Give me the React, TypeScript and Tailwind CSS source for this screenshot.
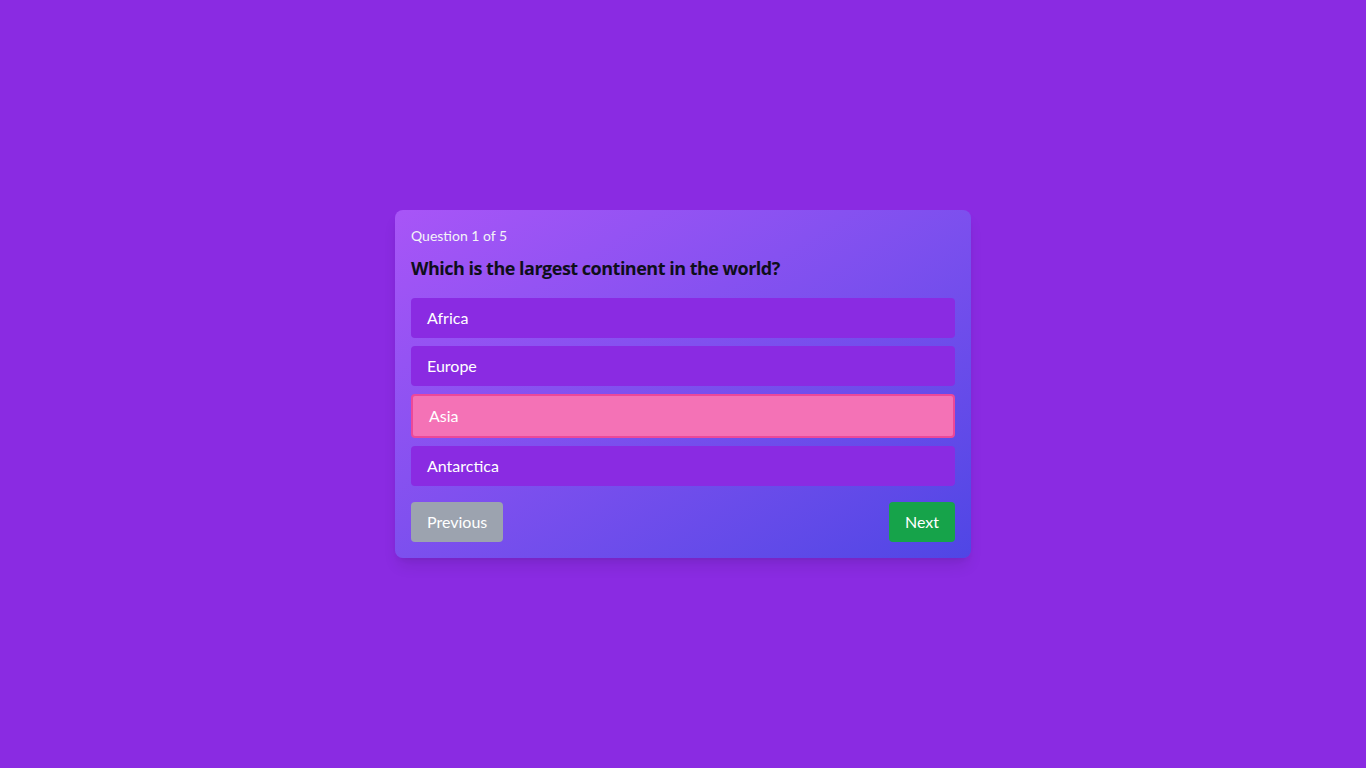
const options = ["Africa", "Europe", "Asia", "Antarctica"];

export default function App() {
  const selected = "Asia";
  return (
    <div
      className="min-h-screen bg-[#8a2be2] flex items-center justify-center"
      style={{ fontFamily: 'Lato, "Open Sans", sans-serif' }}
    >
      <div className="w-[576px] rounded-lg bg-gradient-to-br from-[#a855f7] to-[#4f46e5] p-4 shadow-lg">
        <p className="text-sm text-[#f3f4f6] mb-2">Question 1 of 5</p>
        <h2 className="text-lg font-bold text-[#0f0f1a] mb-4 font-['Open_Sans',sans-serif] tracking-[-0.5px]">
          Which is the largest continent in the world?
        </h2>
        <div className="flex flex-col gap-2">
          {options.map((opt) =>
            opt === selected ? (
              <button
                key={opt}
                className="w-full text-left px-4 py-2 rounded bg-[#f472b6] border-2 border-[#ec4899] text-white"
              >
                {opt}
              </button>
            ) : (
              <button
                key={opt}
                className="w-full text-left px-4 py-2 rounded bg-[#8a2be2] text-white"
              >
                {opt}
              </button>
            )
          )}
        </div>
        <div className="flex justify-between mt-4">
          <button className="px-4 py-2 rounded bg-[#9ca3af] text-white">Previous</button>
          <button className="px-4 py-2 rounded bg-[#16a34a] text-white">Next</button>
        </div>
      </div>
    </div>
  );
}
